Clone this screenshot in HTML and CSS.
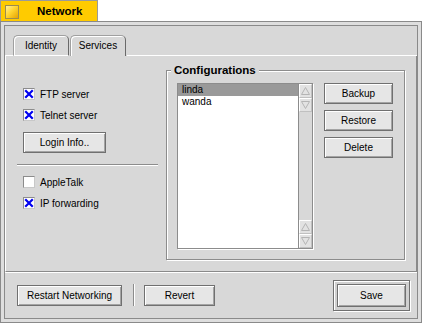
FILE: index.html
```html
<!DOCTYPE html>
<html lang="en">
<head>
    <meta charset="UTF-8">
    <meta name="viewport" content="width=device-width, initial-scale=1.0">
    <title>Network</title>
    <link rel="stylesheet" href="styles.css">
</head>
<body>
    <div class="title-tab">
        <span class="close-box"></span>
        <span class="title">Network</span>
    </div>
    <div class="window">
        <div class="content">
            <div class="tabs">
                <div class="tab-lead"></div>
                <div class="tab">Identity</div>
                <div class="tab active">Services</div>
                <div class="tab-rest"></div>
            </div>

            <div class="tab-body">
                <div class="services">
                    <div class="check">
                        <span class="box"><svg width="10" height="10" viewBox="0 0 10 10"><path d="M2 2L8 8M8 2L2 8" stroke="#0000f0" stroke-width="2.2" stroke-linecap="square"/></svg></span>
                        FTP server
                    </div>
                    <div class="check">
                        <span class="box"><svg width="10" height="10" viewBox="0 0 10 10"><path d="M2 2L8 8M8 2L2 8" stroke="#0000f0" stroke-width="2.2" stroke-linecap="square"/></svg></span>
                        Telnet server
                    </div>
                    <button class="btn login-btn">Login Info..</button>
                    <div class="divider"></div>
                    <div class="check">
                        <span class="box"></span>
                        AppleTalk
                    </div>
                    <div class="check">
                        <span class="box"><svg width="10" height="10" viewBox="0 0 10 10"><path d="M2 2L8 8M8 2L2 8" stroke="#0000f0" stroke-width="2.2" stroke-linecap="square"/></svg></span>
                        IP forwarding
                    </div>
                </div>

                <div class="group">
                    <div class="group-title">Configurations</div>
                    <div class="list">
                        <div class="list-items">
                            <div class="item selected">linda</div>
                            <div class="item">wanda</div>
                        </div>
                        <div class="scrollbar">
                            <div class="arrow"><svg width="9" height="8"><polygon points="4.5,0.5 8.5,7.5 0.5,7.5" fill="none" stroke="#b4b4b4"/></svg></div>
                            <div class="arrow"><svg width="9" height="8"><polygon points="0.5,0.5 8.5,0.5 4.5,7.5" fill="none" stroke="#b4b4b4"/></svg></div>
                            <div class="track"></div>
                            <div class="arrow"><svg width="9" height="8"><polygon points="4.5,0.5 8.5,7.5 0.5,7.5" fill="none" stroke="#b4b4b4"/></svg></div>
                            <div class="arrow"><svg width="9" height="8"><polygon points="0.5,0.5 8.5,0.5 4.5,7.5" fill="none" stroke="#b4b4b4"/></svg></div>
                        </div>
                    </div>
                    <div class="config-buttons">
                        <button class="btn">Backup</button>
                        <button class="btn">Restore</button>
                        <button class="btn">Delete</button>
                    </div>
                </div>
            </div>

            <div class="footer">
                <button class="btn restart-btn">Restart Networking</button>
                <div class="vsep"></div>
                <button class="btn revert-btn">Revert</button>
                <div class="spacer"></div>
                <div class="default-ring">
                    <button class="btn save-btn">Save</button>
                </div>
            </div>
        </div>
    </div>
</body>
</html>
```

FILE: styles.css
```css
* {
    box-sizing: border-box;
}
body {
    margin: 0;
    background-color: #fff;
    font-family: "Liberation Sans", Arial, sans-serif;
    font-size: 10px;
    color: #000;
}
.title-tab {
    width: 98px;
    height: 21px;
    background-color: #ffcb00;
    border: 1px solid #9a9a9a;
    border-bottom: none;
    display: flex;
    align-items: center;
    padding-left: 4px;
}
.close-box {
    width: 14px;
    height: 14px;
    margin-top: 1px;
    border: 1px solid #9c8c50;
    background: linear-gradient(135deg, #fff0a0 0%, #ffd633 45%, #e6a400 100%);
}
.title {
    margin-left: 18px;
    font-weight: bold;
    font-size: 11.5px;
}
.window {
    width: 422px;
    height: 302px;
    border: 1px solid #8a8a8a;
    background-color: #dedede;
    padding: 3px;
}
.content {
    height: 100%;
    border: 1px solid #8a8a8a;
    background-color: #d8d8d8;
    display: flex;
    flex-direction: column;
}
.tabs {
    display: flex;
    height: 21px;
    margin-top: 9px;
}
.tab-lead {
    width: 8px;
    border-bottom: 1px solid #fff;
}
.tab {
    width: 56px;
    margin-right: 1px;
    border-top: 1px solid #a0a0a0;
    border-left: 1px solid #a0a0a0;
    border-right: 1px solid #6a6a6a;
    border-bottom: 1px solid #fff;
    border-radius: 5px 5px 0 0;
    box-shadow: inset 1px 1px 0 #fff;
    text-align: center;
    padding-top: 4px;
}
.tab.active {
    border-bottom: none;
}
.tab-rest {
    flex: 1;
    border-bottom: 1px solid #fff;
}
.tab-body {
    height: 216px;
    display: flex;
    padding: 14px 11px 11px 11px;
    border-left: 1px solid #fff;
    border-right: 1px solid #8a8a8a;
    border-bottom: 1px solid #8a8a8a;
    box-shadow: 0 1px 0 #fff;
}
.services {
    width: 141px;
    margin-right: 8px;
    padding-top: 18px;
    display: flex;
    flex-direction: column;
}
.check {
    display: flex;
    align-items: center;
    height: 12px;
    padding-left: 6px;
    margin-bottom: 9px;
    white-space: nowrap;
}
.box {
    width: 12px;
    height: 12px;
    margin-right: 5px;
    background-color: #fff;
    border: 1px solid;
    border-color: #8c8c8c #c8c8c8 #c8c8c8 #8c8c8c;
    display: flex;
}
.btn {
    font-family: "Liberation Sans", Arial, sans-serif;
    font-size: 10px;
    color: #000;
    height: 21px;
    padding: 0;
    background-color: #e6e6e6;
    border: 1px solid #707070;
    box-shadow: inset 1px 1px 0 #fff, inset -1px -1px 0 #a4a4a4;
}
.login-btn {
    width: 83px;
    margin-left: 6px;
    margin-top: 2px;
}
.divider {
    height: 2px;
    margin: 11px 0 10px 0;
    border-top: 1px solid #8c8c8c;
    border-bottom: 1px solid #fff;
}
.group {
    flex: 1;
    position: relative;
    display: flex;
    padding: 12px 10px 10px 10px;
    border: 1px solid #8c8c8c;
    box-shadow: inset 1px 1px 0 #fff, 1px 1px 0 #fff;
}
.group-title {
    position: absolute;
    top: -8px;
    left: 4px;
    padding: 0 3px;
    background-color: #d8d8d8;
    font-weight: bold;
    font-size: 11.5px;
    line-height: 14px;
}
.list {
    width: 136px;
    display: flex;
    border: 1px solid #8c8c8c;
    box-shadow: 1px 1px 0 #fff;
}
.list-items {
    flex: 1;
    background-color: #fff;
}
.item {
    height: 12px;
    line-height: 12px;
    padding-left: 4px;
}
.item.selected {
    background-color: #999;
}
.scrollbar {
    width: 14px;
    border-left: 1px solid #8c8c8c;
    background-color: #d8d8d8;
    display: flex;
    flex-direction: column;
}
.arrow {
    height: 14px;
    display: flex;
    align-items: center;
    justify-content: center;
    background-color: #e2e2e2;
    border-top: 1px solid #fff;
    border-left: 1px solid #fff;
    border-bottom: 1px solid #c0c0c0;
    border-right: 1px solid #c0c0c0;
}
.track {
    flex: 1;
}
.config-buttons {
    width: 69px;
    margin-left: 11px;
    display: flex;
    flex-direction: column;
    gap: 6px;
}
.footer {
    flex: 1;
    display: flex;
    align-items: center;
    padding: 0 7px 0 12px;
}
.restart-btn {
    width: 105px;
}
.vsep {
    width: 2px;
    height: 22px;
    margin: 0 9px 0 11px;
    border-left: 1px solid #8c8c8c;
    border-right: 1px solid #fff;
}
.revert-btn {
    width: 71px;
}
.spacer {
    flex: 1;
}
.default-ring {
    width: 77px;
    height: 31px;
    padding: 3px;
    border: 1px solid #707070;
    box-shadow: inset 1px 1px 0 #fff, 1px 1px 0 #fff;
    background-color: #d0d0d0;
}
.save-btn {
    width: 100%;
    height: 100%;
}
```
